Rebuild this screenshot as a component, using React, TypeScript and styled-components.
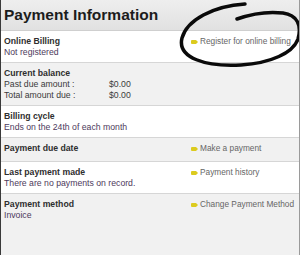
import React from 'react';
import styled, { createGlobalStyle } from 'styled-components';

const GlobalStyle = createGlobalStyle`
  html, body {
    margin: 0;
    padding: 0;
    background: #fff;
  }
  body {
    font-family: "Liberation Sans", Arial, sans-serif;
  }
`;

const Panel = styled.div`
  position: relative;
  width: 300px;
  height: 255px;
  box-sizing: border-box;
  overflow: hidden;
  border-left: 1px solid #3a3a3a;
  border-right: 1px solid #9a9a9a;
  background: #f1f1f1;
  display: flex;
  flex-direction: column;
`;

const Header = styled.div`
  height: 30px;
  flex: none;
  display: flex;
  align-items: center;
  padding-left: 3px;
  background: linear-gradient(#eeeeee, #e1e1e1);
  border-bottom: 1px solid #cfcfcf;
  font-size: 15.5px;
  font-weight: bold;
  color: #1c1c1c;
`;

const Row = styled.div<{ $shade?: boolean; $grow?: boolean }>`
  display: grid;
  grid-template-columns: 1fr 108px;
  box-sizing: border-box;
  min-height: 24px;
  padding: 5px 0 4px 3px;
  background: ${(p) => (p.$shade ? '#f1f1f1' : '#ffffff')};
  border-bottom: ${(p) => (p.$grow ? 'none' : '1px solid #d6d6d6')};
  flex: ${(p) => (p.$grow ? '1' : 'none')};
  font-size: 8.7px;
  line-height: 11px;
`;

const Info = styled.div`
  display: flex;
  flex-direction: column;
`;

const Label = styled.div`
  font-weight: bold;
  color: #2e2e2e;
`;

const Value = styled.div`
  color: #4d3a5c;
`;

const Amounts = styled.div`
  display: grid;
  grid-template-columns: 105px auto;
  color: #3a3a3a;
`;

const LinkCell = styled.div`
  display: flex;
  align-items: flex-start;
`;

const Link = styled.a`
  display: flex;
  align-items: center;
  gap: 2px;
  font-size: 8.3px;
  color: #666;
  text-decoration: none;
  white-space: nowrap;
`;

const Circle = styled.svg`
  position: absolute;
  left: 0;
  top: 0;
  pointer-events: none;
`;

const Arrow = () => (
  <svg width="7" height="4" viewBox="0 0 7 4">
    <path d="M0 1 Q0 0 1 0 H5 L7 2 L5 4 H1 Q0 4 0 3 Z" fill="#dccb1e" />
  </svg>
);

const Action = ({ text }: { text: string }) => (
  <LinkCell>
    <Link href="#">
      <Arrow />
      {text}
    </Link>
  </LinkCell>
);

export default function App() {
  return (
    <>
      <GlobalStyle />
      <Panel>
        <Header>Payment Information</Header>

        <Row>
          <Info>
            <Label>Online Billing</Label>
            <Value>Not registered</Value>
          </Info>
          <Action text="Register for online billing" />
        </Row>

        <Row $shade>
          <Info>
            <Label>Current balance</Label>
            <Amounts>
              <span>Past due amount :</span>
              <span>$0.00</span>
              <span>Total amount due :</span>
              <span>$0.00</span>
            </Amounts>
          </Info>
          <div />
        </Row>

        <Row>
          <Info>
            <Label>Billing cycle</Label>
            <Value>Ends on the 24th of each month</Value>
          </Info>
          <div />
        </Row>

        <Row $shade>
          <Info>
            <Label>Payment due date</Label>
          </Info>
          <Action text="Make a payment" />
        </Row>

        <Row>
          <Info>
            <Label>Last payment made</Label>
            <Value>There are no payments on record.</Value>
          </Info>
          <Action text="Payment history" />
        </Row>

        <Row $shade $grow>
          <Info>
            <Label>Payment method</Label>
            <Value>Invoice</Value>
          </Info>
          <Action text="Change Payment Method" />
        </Row>

        <Circle width="300" height="255" viewBox="0 0 300 255">
          <path
            d="M244 4 C212 6, 186 20, 181 38 C176 58, 205 67, 240 65 C270 63, 292 53, 297 39 C301 25, 296 15, 282 13 C265 11, 250 14, 236 19"
            fill="none"
            stroke="#0a0a0a"
            strokeWidth="3.5"
            strokeLinecap="round"
          />
        </Circle>
      </Panel>
    </>
  );
}
